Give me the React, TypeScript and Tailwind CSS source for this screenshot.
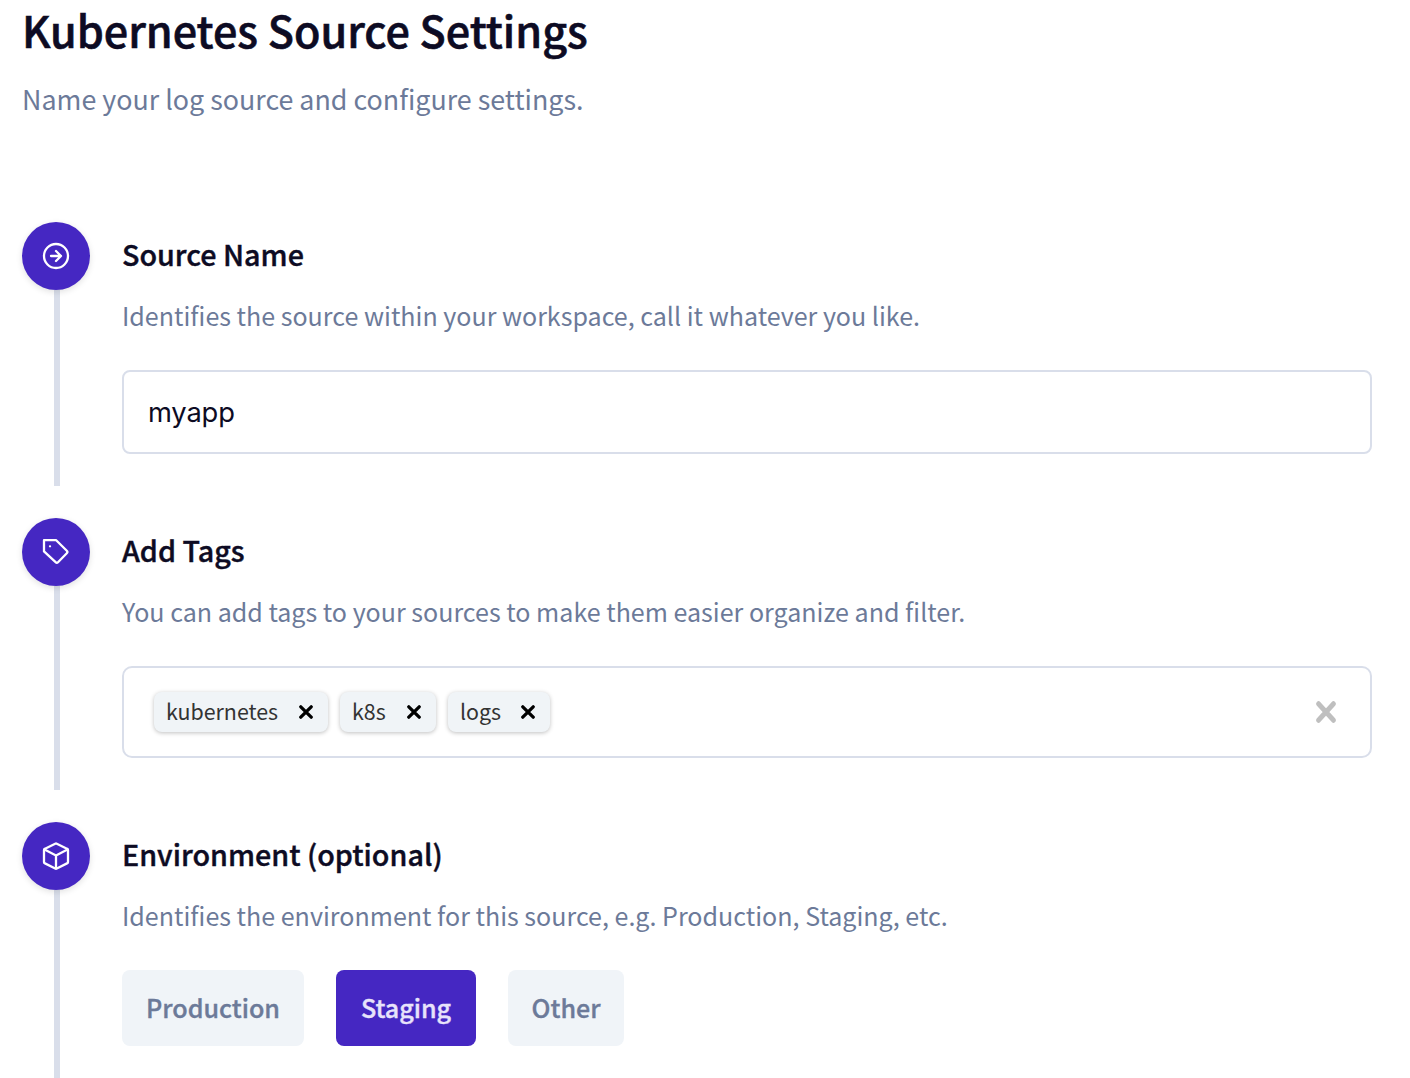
import type { ReactNode } from 'react';

const iconProps = {
  viewBox: '0 0 28 28',
  fill: 'none',
  stroke: 'currentColor',
  strokeWidth: 2.3,
  strokeLinecap: 'round',
  strokeLinejoin: 'round',
} as const;

const ArrowIcon = () => (
  <svg className="size-7" {...iconProps}>
    <circle cx="14" cy="14" r="12" />
    <path d="M9 14h10M14 9l5 5-5 5" />
  </svg>
);

const TagIcon = () => (
  <svg className="size-7" {...iconProps}>
    <path d="M2 2.200h12.200l10.600 10.600a1.700 1.700 0 0 1 0 2.400l-8.800 9a1.700 1.700 0 0 1-2.400 0L2 13.400z" />
    <path d="M8 8.300h.01" />
  </svg>
);

const BoxIcon = () => (
  <svg className="size-7" {...iconProps}>
    <path d="M13.200 1.700a1.800 1.800 0 0 1 1.600 0L25 6.700a1.500 1.500 0 0 1 1 1.400v12a1.500 1.500 0 0 1-1 1.300l-10.200 5.100a1.800 1.800 0 0 1-1.600 0L3 21.400a1.500 1.500 0 0 1-1-1.300v-12a1.500 1.500 0 0 1 1-1.400z" />
    <path d="m2.500 7.500 11.500 6 11.500-6M14 13.500v13" />
  </svg>
);

const CrossIcon = ({ className }: { className: string }) => (
  <svg className={className} viewBox="0 0 14 14" preserveAspectRatio="none" fill="none" stroke="currentColor" strokeWidth="3.300" strokeLinecap="round">
    <path d="m1.800 1.800 10.400 10.400M12.200 1.800 1.800 12.200" />
  </svg>
);

interface StepProps {
  icon: ReactNode;
  title: string;
  text: string;
  height: string;
  children: ReactNode;
}

function Step({ icon, title, text, height, children }: StepProps) {
  return (
    <section className={`flex gap-8 ${height}`}>
      <div className="flex w-[68px] shrink-0 flex-col items-center">
        <div className="z-10 flex size-[68px] shrink-0 items-center justify-center rounded-full bg-[#4527c2] text-white shadow-[0_2px_6px_rgba(0,0,0,0.12)]">
          {icon}
        </div>
        <div className="ml-[2px] w-1.5 flex-1 bg-[#d9deea]" />
      </div>
      <div className="w-[1250px]">
        <h2 className="h-[68px] text-[28.7px] font-medium leading-[64px] text-[#0d0b23] [-webkit-text-stroke:0.4px_#0d0b23]">{title}</h2>
        <p className="h-20 whitespace-nowrap pt-1.5 text-[25.06px] leading-[38px] text-[#6c7a99]">{text}</p>
        {children}
      </div>
    </section>
  );
}

function Chip({ label, width }: { label: string; width: string }) {
  return (
    <div className={`flex h-10 items-center justify-between rounded-lg bg-[#f0f4f7] pl-3 pr-[15px] shadow-[0_1px_4px_rgba(0,0,0,0.25)] ${width}`}>
      <span className="pb-0.5 text-[21.4px] leading-[38px] text-[#333333]">{label}</span>
      <CrossIcon className="size-[14px] text-black" />
    </div>
  );
}

export default function App() {
  return (
    <main className="h-[1078px] overflow-hidden bg-white pl-[22px] font-['Noto_Sans_CJK_SC',sans-serif]">
      <h1 className="h-16 whitespace-nowrap text-[43.1px] font-medium leading-[59px] text-[#0d0b23] [-webkit-text-stroke:0.6px_#0d0b23]">
        Kubernetes Source Settings
      </h1>
      <p className="h-[158px] pt-[15px] text-[26.85px] leading-10 text-[#6c7a99]">Name your log source and configure settings.</p>
      <Step icon={<ArrowIcon />} title="Source Name" text="Identifies the source within your workspace, call it whatever you like." height="h-[264px] mb-8">
        <input
          className="block h-[84px] w-full rounded-lg border-2 border-[#d9deea] px-6 font-[family-name:Inter,sans-serif] text-[27.3px] tracking-[-0.15px] text-[#0d0b23] outline-none"
          defaultValue="myapp"
        />
      </Step>
      <Step icon={<TagIcon />} title="Add Tags" text="You can add tags to your sources to make them easier organize and filter." height="h-[272px] mb-8">
        <div className="flex h-[92px] items-center gap-3 rounded-[10px] border-2 border-[#d9deea] pl-[30px] pr-[34px]">
          <Chip label="kubernetes" width="w-[174px]" />
          <Chip label="k8s" width="w-24" />
          <Chip label="logs" width="w-[102px]" />
          <CrossIcon className="ml-auto h-[22px] w-5 text-[#bfbfbf]" />
        </div>
      </Step>
      <Step icon={<BoxIcon />} title="Environment (optional)" text="Identifies the environment for this source, e.g. Production, Staging, etc." height="h-[256px]">
        <div className="flex gap-8 text-[25.1px] font-medium leading-[74px]">
          <button className="h-[76px] w-[182px] rounded-lg bg-[#f0f4f8] pb-0.5 text-[#6c7a99] [-webkit-text-stroke:0.35px_#6c7a99]">Production</button>
          <button className="h-[76px] w-[140px] rounded-lg bg-[#4527c2] pb-0.5 text-[#e8e3fb] [-webkit-text-stroke:0.35px_#e8e3fb]">Staging</button>
          <button className="h-[76px] w-[116px] rounded-lg bg-[#f0f4f8] pb-0.5 text-[#6c7a99] [-webkit-text-stroke:0.35px_#6c7a99]">Other</button>
        </div>
      </Step>
    </main>
  );
}
